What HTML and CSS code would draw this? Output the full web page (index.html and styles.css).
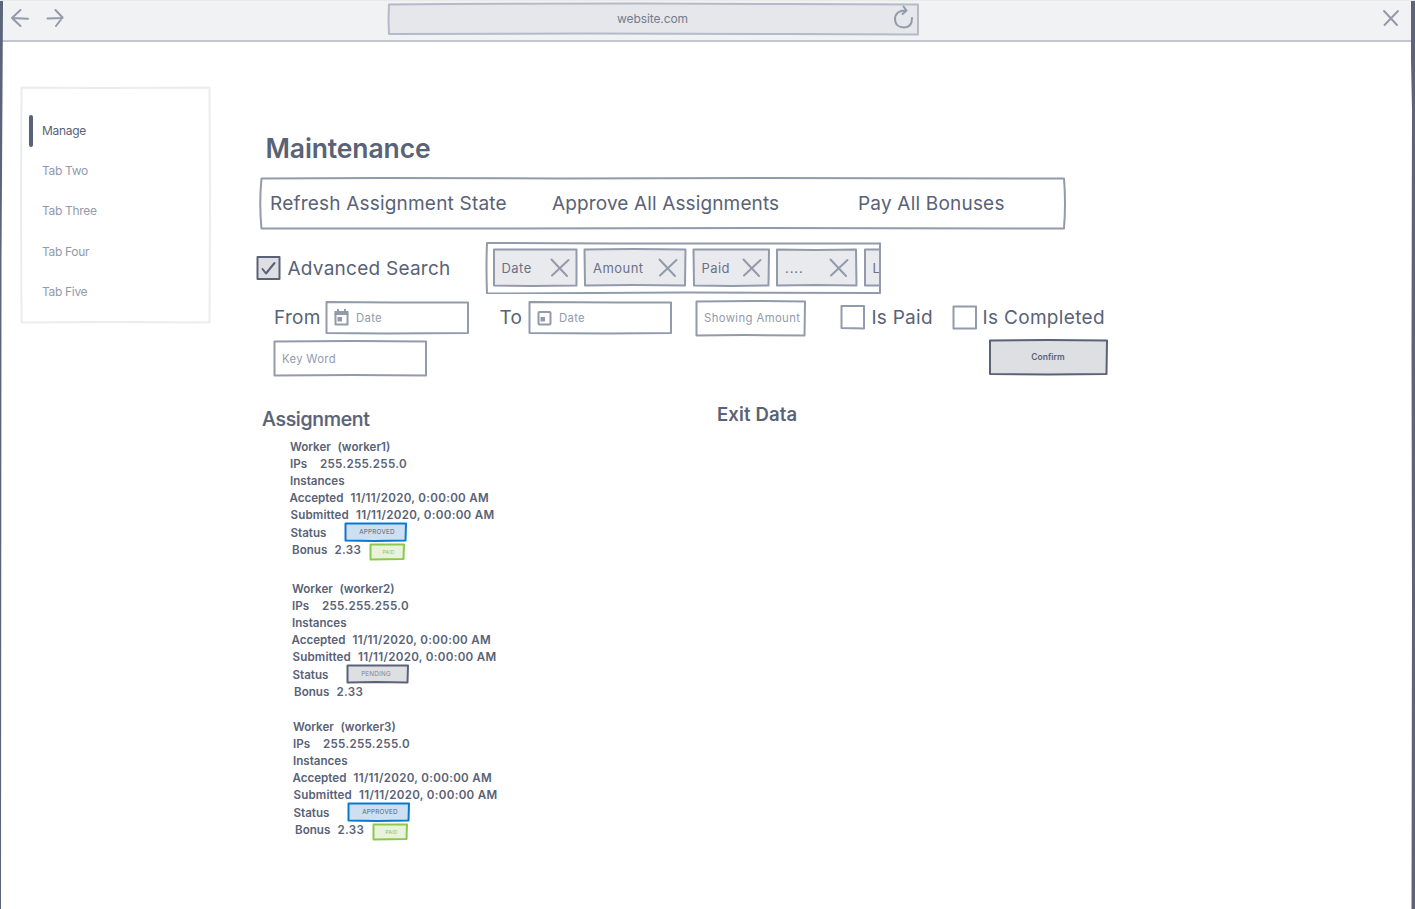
FILE: index.html
```html
<!DOCTYPE html>
<html lang="en">
<head>
<meta charset="utf-8">
<title>Maintenance</title>
<link rel="stylesheet" href="styles.css">
</head>
<body>
<div class="window">
  <svg class="frame" viewBox="0 0 1415 909"><path d="M0 1H3L2.500 90L1.500 260L1 909H0Z M1411 1L1411 60L1412 110L1411.500 350L1412 600L1411.500 909H1415V1Z"/></svg>
  <header class="browser">
    <svg class="nav" viewBox="0 0 60 24"><path d="M9.500 4L1 12L9.500 20M1 12L17 12.700M44.500 4L51.500 11.500L45 20M51.500 12L36.500 12.500"/></svg>
    <div class="address box"><svg class="sk" viewBox="0 0 531 32"><path d="M2 1.500L60 1L250 .5L400 1L531 1.500L531 15L531 31.500L400 31L200 30.500L2 31L1.500 16Z"/></svg><span class="url">website.com</span><svg class="reload" viewBox="0 0 20 24"><path d="M9.500 .5L12.500 4.500L8.500 8M12 4.500C5.500 4 1 7.500 1 13C1 18.500 5 21.500 10 21.500C15 21.500 18 18 18 12"/></svg></div>
    <svg class="close" viewBox="0 0 16 16"><path d="M1 1L14 15M15 1L1.500 15"/></svg>
  </header>
  <div class="page">
    <nav class="tabs box"><svg class="sk" viewBox="0 0 190 237"><path d="M1.500 .5L80 1L189.500 .5L190 120L189.500 235.500L90 235L1.500 235.500L1 110Z"/></svg>
      <a class="tab active">Manage</a>
      <a class="tab">Tab Two</a>
      <a class="tab">Tab Three</a>
      <a class="tab">Tab Four</a>
      <a class="tab">Tab Five</a>
    </nav>
    <main class="content">
      <h1>Maintenance</h1>
      <div class="actions box"><svg class="sk" viewBox="0 0 805 52"><path d="M2.500 1.500L120 1L300 1.500L500 1L805 1.500Q807 26 805 51.500L500 51L200 51.500L2.500 51.500Q0 26 2.500 1.500Z"/></svg>
        <span>Refresh Assignment State</span><span>Approve All Assignments</span><span>Pay All Bonuses</span>
      </div>
      <div class="search">
        <span class="check on"><svg class="sk" viewBox="0 0 24 24"><path d="M1.500 1L23.500 1V23L1.500 23Z"/><path d="M6.500 13L10 17.500L18.500 7"/></svg></span>
        <span class="big adv">Advanced Search</span>
        <div class="chips box"><svg class="sk" viewBox="0 0 396 52"><path d="M3 1L130 1.500L396 1.500L396 25L396 51L200 50.500L3 51.500Q2 26 3 1Z"/></svg>
          <div class="chip c1"><svg class="sk" viewBox="0 0 85 39"><path d="M2 1.500L84.500 1.500V37.500L40 38L2 37.500Z"/></svg><span>Date</span><svg class="x" viewBox="0 0 18 18"><path d="M.5 .5L16 17M17.500 1L1 16.500"/></svg></div>
          <div class="chip c2"><svg class="sk" viewBox="0 0 102 39"><path d="M1.500 1.500L50 1L102.500 1.500L102 37.500L50 37L2 37.500Z"/></svg><span>Amount</span><svg class="x" viewBox="0 0 18 18"><path d="M.5 .5L16 17M17.500 1L1 16.500"/></svg></div>
          <div class="chip c3"><svg class="sk" viewBox="0 0 77 39"><path d="M1.500 1.500L77 1.500L76.500 37.500L40 38L2 37.500Z"/></svg><span>Paid</span><svg class="x" viewBox="0 0 18 18"><path d="M.5 .5L16 17M17.500 1L1 16.500"/></svg></div>
          <div class="chip c4"><svg class="sk" viewBox="0 0 81 39"><path d="M2 1.500L40 2L81 1.500L81.500 37.500L40 37L2 37.500Z"/></svg><span class="dots">....</span><svg class="x" viewBox="0 0 18 18"><path d="M.5 .5L16 17M17.500 1L1 16.500"/></svg></div>
          <div class="chip c5"><svg class="sk" viewBox="0 0 40 39"><path d="M2 1.500H39V37.500H2Z"/></svg><span>L</span></div>
          <svg class="edge" viewBox="0 0 4 52"><path d="M3 1.500V50.500"/></svg>
        </div>
      </div>
      <div class="filters">
        <span class="big from">From</span>
        <div class="input"><svg class="sk" viewBox="0 0 143 33"><path d="M1.500 1L70 1.500L143 1.500V32L60 32.500L1.500 32Z"/></svg><svg class="cal" viewBox="0 0 15 17"><path d="M1.500 4.500V15.500H13.500V4.500Z"/><path class="solid" d="M.5 2H3V0H5V2H10V0H12V2H14.500V6H.5ZM3.500 8H8V12.500H3.500Z"/></svg><span class="ph">Date</span></div>
        <span class="big to">To</span>
        <div class="input"><svg class="sk" viewBox="0 0 143 33"><path d="M1.500 1L90 1.500L143 1.500V32L80 32.500L1.500 32Z"/></svg><svg class="cal" viewBox="0 0 15 17"><rect x="1.500" y="3" width="12" height="12.500" rx="1"/><path class="solid" d="M3.500 8H8V12.500H3.500Z"/></svg><span class="ph">Date</span></div>
        <div class="input amount"><svg class="sk" viewBox="0 0 110 36"><path d="M1.500 1.500L60 1L110 1.500L109.500 35.500L50 35L1.500 35.500Z"/></svg><span class="ph show">Showing Amount</span></div>
        <span class="check"><svg class="sk" viewBox="0 0 24 24"><path d="M1.500 1L24 1V23.500L1.500 23Z"/></svg></span>
        <span class="big paidl">Is Paid</span>
        <span class="check"><svg class="sk" viewBox="0 0 24 24"><path d="M1.500 1.500L24 1.500V23.500L1.500 23.500Z"/></svg></span>
        <span class="big comp">Is Completed</span>
      </div>
      <div class="submit">
        <div class="input keyword"><svg class="sk" viewBox="0 0 153 36"><path d="M1.500 1.500L80 1L153 1.500L153 35.500L80 35L1.500 35.500Z"/></svg><span class="ph key">Key Word</span></div>
        <button class="confirm"><svg class="sk" viewBox="0 0 119 36"><path d="M2 1.500L60 1L119 1.500L118.500 35L60 35.500L2 35Z"/></svg><span>Confirm</span></button>
      </div>
      <div class="data">
        <section class="assignments">
          <h2>Assignment</h2>
          <div class="worker">
            <p><b>Worker</b><i>(worker1)</i></p>
            <p class="ip"><b>IPs</b><i class="num">255.255.255.0</i></p>
            <p><b>Instances</b></p>
            <p class="acc"><b>Accepted</b><i class="num">11/11/2020, 0:00:00 AM</i></p>
            <p class="sub"><b>Submitted</b><i class="num">11/11/2020, 0:00:00 AM</i></p>
            <p class="status"><b>Status</b><span class="badge blue"><svg class="sk" viewBox="0 0 62 20"><path d="M1.500 1.500L62 1.500L61.500 18.500L30 19L1.500 18.500Z"/></svg><span>APPROVED</span></span></p>
            <p class="bonus"><b>Bonus</b><i class="num">2.33</i><span class="badge green"><svg class="sk" viewBox="0 0 35 17"><path d="M1.500 1.500H35L34.500 16L1.500 16.500Z"/></svg><span>PAID</span></span></p>
          </div>
          <div class="worker second">
            <p><b>Worker</b><i>(worker2)</i></p>
            <p class="ip"><b>IPs</b><i class="num">255.255.255.0</i></p>
            <p><b>Instances</b></p>
            <p class="acc"><b>Accepted</b><i class="num">11/11/2020, 0:00:00 AM</i></p>
            <p class="sub"><b>Submitted</b><i class="num">11/11/2020, 0:00:00 AM</i></p>
            <p class="status"><b>Status</b><span class="badge gray"><svg class="sk" viewBox="0 0 62 20"><path d="M1.500 1.500L62 1.500L61.500 18.500L30 18L1.500 18.500Z"/></svg><span>PENDING</span></span></p>
            <p class="bonus"><b>Bonus</b><i class="num">2.33</i></p>
          </div>
          <div class="worker third">
            <p><b>Worker</b><i>(worker3)</i></p>
            <p class="ip"><b>IPs</b><i class="num">255.255.255.0</i></p>
            <p><b>Instances</b></p>
            <p class="acc"><b>Accepted</b><i class="num">11/11/2020, 0:00:00 AM</i></p>
            <p class="sub"><b>Submitted</b><i class="num">11/11/2020, 0:00:00 AM</i></p>
            <p class="status"><b>Status</b><span class="badge blue"><svg class="sk" viewBox="0 0 62 20"><path d="M1.500 1.500L62 1.500L61.500 18.500L30 19L1.500 18.500Z"/></svg><span>APPROVED</span></span></p>
            <p class="bonus"><b>Bonus</b><i class="num">2.33</i><span class="badge green"><svg class="sk" viewBox="0 0 35 17"><path d="M1.500 1.500H35L34.500 16L1.500 16.500Z"/></svg><span>PAID</span></span></p>
          </div>
        </section>
        <section><h2 class="exit">Exit Data</h2></section>
      </div>
    </main>
  </div>
</div>
</body>
</html>
```
FILE: styles.css
```css
*{box-sizing:border-box}
body{margin:0;background:#fff;color:#596276;font-family:Inter,"Liberation Sans",sans-serif;white-space:nowrap}
svg{fill:none;stroke:#929aab;stroke-width:2;stroke-linejoin:round;stroke-linecap:round;overflow:visible;flex:none}
.window{position:relative;width:1415px;height:909px;overflow:hidden}
.frame{position:absolute;inset:0;z-index:2;fill:#5b6478;stroke:none}
.browser{display:flex;height:42px;background:#f1f2f4;border-top:1px solid #e8e9eb;border-bottom:2px solid #c1c5cf}
.nav{width:60px;height:24px;margin:5px 0 0 11px}
.box,.input,.chip,.check,.confirm,.badge{position:relative;display:flex;align-items:center}
.sk{position:absolute;top:-.5px;left:-1px;width:100%;height:100%}
.sk~*{position:relative}
.address{width:531px;height:32px;margin:2px 0 0 317px}
.address .sk{fill:#e6e7eb;stroke:#b4bac7}
.url{width:72px;font-size:12px;letter-spacing:-.09px;margin:-2px 0 0 229px;color:#737b8c}
.reload{width:20px;height:24px;margin-left:205px;margin-top:-2px}
.close{width:16px;height:16px;margin:9px 0 0 464px}
.page{display:flex;align-items:flex-start}
.tabs{width:190px;height:237px;margin:45px 0 0 21px;flex-direction:column;align-items:flex-start;padding-top:23.5px}
.tabs .sk{stroke:#ebecef}
.tab{display:flex;align-items:center;height:40.2px;font-size:12px;letter-spacing:-.32px;padding-left:21px;color:#929aab}
.active{color:#596276;padding-left:8px}
.active:before{content:"";width:4px;height:32px;border-radius:2px;background:#596276;margin-right:9px}
.content{margin:91px 0 0 46px;width:860px}
h1,h2,p{margin:0}
h1{height:30px;line-height:30px;font-size:26.5px;letter-spacing:-.12px;font-weight:600;margin-left:8.5px}
.actions{display:grid;grid-template-columns:282px 306px 1fr;width:805px;height:52px;margin:14px 0 0 3px;padding-left:10px;font-size:19px;letter-spacing:.2px}
.actions span:nth-of-type(2){letter-spacing:.13px}
.search{display:flex;align-items:center;height:52px;margin:13px 0 0 0}
.big{font-size:19px;letter-spacing:.25px}
.check{width:24px;height:24px}
.on .sk{stroke:#596276;fill:#dedfe3}
.on path+path{fill:none}
.adv{width:197px;margin-left:6.5px}
.chips{width:396px;height:52px;padding-left:8px;gap:6.5px;overflow:hidden}
.chip{height:39px;flex:none;font-size:13px;letter-spacing:.45px;justify-content:space-between;padding:0 9px 0 9px;color:#6a7284}
.chip .sk{fill:#e9eaee}
.chip .x{width:18px;height:18px}
.edge{position:absolute;right:0;top:0;width:4px;height:52px}
.dots{letter-spacing:.9px}
.c1{width:85px}.c2{width:102px}.c3{width:77px}.c4{width:81px}.c5{width:40px}
.filters{display:flex;height:36px;margin:7px 0 0 17px}
.input{width:143px;height:33px;padding-left:8px}
.filters>.big{line-height:34px}
.filters .check{margin-top:4px}
.ph{font-size:11.3px;letter-spacing:.33px;color:#929aab}
.cal{width:15px;height:17px;margin-right:7px}
.cal .solid{fill:#929aab;stroke:none}
.from{width:52px}.to{width:29.5px;margin-left:30.5px}
.amount{width:110px;height:36px;margin:-.5px 35px 0 24px;padding-bottom:1px}
.show{letter-spacing:.4px}
.paidl{width:81px;margin-left:6.5px}
.comp{margin-left:6px;letter-spacing:.33px!important}
.submit{display:flex;justify-content:space-between;width:834px;margin:3.5px 0 0 17px}
.keyword{width:153px;height:36px}
.confirm{width:119px;height:36px;margin-top:-1.5px;justify-content:center;background:none;border:0;padding:0 1px 0 0;font:600 8.5px Inter,sans-serif;color:#596276}
.confirm .sk{fill:#dedfe3;stroke:#596276}
.data{display:grid;grid-template-columns:455px 1fr;margin:28.5px 0 0 5px}
h2{font-size:19.5px;letter-spacing:-.3px;font-weight:500;height:28px;line-height:28px}
.assignments h2{-webkit-text-stroke:.2px}
.exit{font-size:18.5px;font-weight:600;letter-spacing:.15px;margin-top:-5px}
.worker{margin:5px 0 0 28px;font-size:11.6px;width:230px}
.second{margin:22px 0 0 30px}
.third{margin:18px 0 0 31px}
.worker p{display:flex;height:17px;align-items:center}
.worker b,.worker i{font-style:normal;font-weight:600;flex:none}
.worker b{width:47.5px}
.worker .num{letter-spacing:.3px}
.worker .ip b{width:30px}
.worker .acc{margin-left:-.5px}
.worker .acc b{width:61px}
.worker .sub{height:18px;margin-left:.5px}
.worker .sub b{width:65.500px;letter-spacing:.15px}
.worker .status{margin-left:.5px}
.worker .status b{width:54.500px}
.worker .bonus{margin-left:2px}
.worker .bonus b{width:42.500px}
.badge{width:62px;height:20px;justify-content:center;font-size:6.3px;letter-spacing:.21px;padding:0 0 1px 2px;flex:none}
.blue .sk{fill:#cce0f1;stroke:#0a78d0}
.gray .sk{fill:#dedfe3;stroke:#596276}
.gray{color:#7d8496;padding-right:6px}
.green{width:35px;height:17px;font-size:5px;margin:4px 0 0 9px;color:#8bc34a;padding-bottom:0}
.green .sk{fill:#e8f3db;stroke:#8bc84b}
```
